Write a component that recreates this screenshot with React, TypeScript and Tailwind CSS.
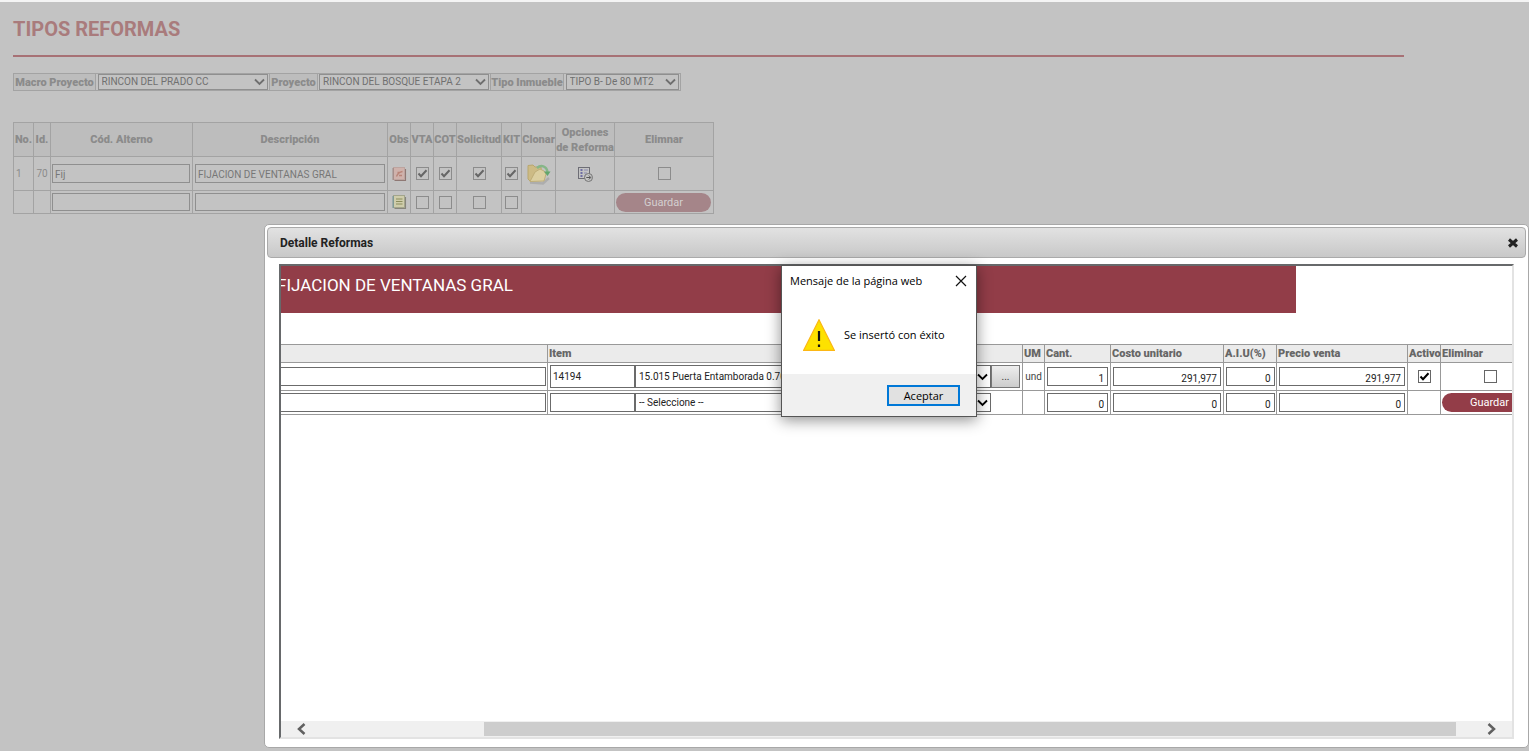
import type { ReactNode } from "react";
import clsx from "clsx";

interface ReformRow {
  no: string;
  id: string;
  code: string;
  description: string;
  checked: boolean;
  saved: boolean;
}

interface ItemRow {
  item: string;
  product: string;
  um: string;
  qty: string;
  cost: string;
  aiu: string;
  price: string;
  saved: boolean;
}

const reforms: ReformRow[] = [
  { no: "1", id: "70", code: "Fij", description: "FIJACION DE VENTANAS GRAL", checked: true, saved: true },
  { no: "", id: "", code: "", description: "", checked: false, saved: false },
];

const items: ItemRow[] = [
  { item: "14194", product: "15.015 Puerta Entamborada 0.70", um: "und", qty: "1", cost: "291,977", aiu: "0", price: "291,977", saved: true },
  { item: "", product: "-- Seleccione --", um: "", qty: "0", cost: "0", aiu: "0", price: "0", saved: false },
];

const flags = ["VTA", "COT", "Solicitud", "KIT"];

function Chevron({ className }: { className?: string }) {
  return (
    <svg viewBox="0 0 11 8" className={clsx("pointer-events-none absolute h-2 w-[11px]", className)} fill="none" stroke="currentColor" strokeWidth="1.8">
      <path d="M1 1.5 5.5 6 10 1.5" />
    </svg>
  );
}

function FilterSelect({ id, value, className }: { id: string; value: string; className: string }) {
  return (
    <div className={clsx("relative mx-auto", className)}>
      <select id={id} className="block h-4 w-full appearance-none border border-[#8f8f8f] bg-transparent px-[3px] text-[10px] leading-[14px] text-[#707070]">
        <option>{value}</option>
      </select>
      <Chevron className="right-[3px] top-1 text-[#6e6e6e]" />
    </div>
  );
}

function CheckBox({ label, checked, dim }: { label: string; checked?: boolean; dim?: boolean }) {
  return (
    <span className={clsx("relative mx-auto block size-[13px]", dim ? "text-[#666666]" : "text-black")}>
      <input
        type="checkbox"
        aria-label={label}
        defaultChecked={checked}
        className={clsx("peer block size-[13px] appearance-none border", dim ? "border-[#8c8c8c]" : "border-[#666666] bg-white")}
      />
      <svg viewBox="0 0 13 13" className="pointer-events-none absolute inset-0 hidden peer-checked:block" fill="none" stroke="currentColor" strokeWidth="2">
        <path d="M2.5 6.5 5 9.2 10.5 3.2" />
      </svg>
    </span>
  );
}

function NoteIcon({ red }: { red?: boolean }) {
  return (
    <svg viewBox="0 0 15 16" className="mx-auto block h-4 w-[15px]">
      <path d="M13.300 3v11.300H2.500" fill="none" stroke={red ? "#8f7874" : "#87857c"} strokeWidth="1.500" />
      <rect x="1.500" y="1.500" width="11" height="12" fill={red ? "#cfb2ac" : "#cfcdab"} stroke={red ? "#bda49f" : "#a3a58c"} />
      <path d="M1.200 2v12" stroke={red ? "#a58f8b" : "#7f9896"} strokeWidth="1.500" />
      {red ? (
        <path d="M4.500 10.500c1-3 3.500-4.500 6-5M5.500 6.500h2.500M7 9.500h3" fill="none" stroke="#b98478" strokeWidth="1.300" />
      ) : (
        <path d="M4 5h6.500M4 7.500h6.500M4 10h6.500" stroke="#8b8d5c" />
      )}
    </svg>
  );
}

function CloneIcon() {
  return (
    <svg viewBox="0 0 26 24" className="mx-auto block h-6 w-[26px]">
      <path d="M4 20.500 17 21.500 23 16" fill="none" stroke="#adadad" strokeWidth="2.500" />
      <path d="M2 3.500 7 3l2 2h6l1 12-12 2L2 17z" fill="#cdbb85" stroke="#b9a76f" />
      <path d="M4 19.500 9 10l5-3 4 2 2 3-2 7z" fill="#dccfa0" stroke="#bfae78" />
      <path d="M11 6c4-3.500 9.500-2 10.500 4" fill="none" stroke="#86b688" strokeWidth="2.500" />
      <path d="M18 9.500h6.500L21.500 14z" fill="#62a66c" />
    </svg>
  );
}

function OptionsIcon() {
  return (
    <svg viewBox="0 0 16 16" className="mx-auto block size-4" fill="none">
      <rect x="1.500" y="1.500" width="11" height="11" stroke="#6d6d75" />
      <path d="M3.500 4h2M3.500 7h2M3.500 10h2" stroke="#54549a" strokeWidth="1.500" />
      <path d="M7 4h4M7 7h3M7 10h1" stroke="#8a8ab0" />
      <circle cx="11.500" cy="11.500" r="4" fill="#c3c3c3" stroke="#747474" />
      <path d="M9.300 11.500h4.200M11.800 9.500l2 2-2 2" stroke="#555555" />
    </svg>
  );
}

function Th({ children, className }: { children?: ReactNode; className?: string }) {
  return <th className={clsx("border border-[#a3a3a3] p-0 text-[11px] font-black leading-[15px]", className)}>{children}</th>;
}

function Td({ children, className }: { children?: ReactNode; className?: string }) {
  return <td className={clsx("border border-[#a3a3a3] p-0", className)}>{children}</td>;
}

function Filters() {
  return (
    <table className="mt-4 h-[18px] table-fixed border-collapse text-[10px] leading-[15px] text-[#8b8b8b]">
      <tbody>
        <tr>
          <Th className="w-[82px] whitespace-nowrap bg-[#bdbdbd]"><label htmlFor="macro">Macro Proyecto</label></Th>
          <Td className="w-[174px]"><FilterSelect id="macro" value="RINCON DEL PRADO CC" className="w-[170px]" /></Td>
          <Th className="w-12 whitespace-nowrap bg-[#bdbdbd]"><label htmlFor="project">Proyecto</label></Th>
          <Td className="w-[173px]"><FilterSelect id="project" value="RINCON DEL BOSQUE ETAPA 2" className="w-[170px]" /></Td>
          <Th className="w-[73px] whitespace-nowrap bg-[#bdbdbd]"><label htmlFor="kind">Tipo Inmueble</label></Th>
          <Td className="w-[117px]"><FilterSelect id="kind" value="TIPO B- De 80 MT2" className="w-[113px]" /></Td>
        </tr>
      </tbody>
    </table>
  );
}

function ReformsTable() {
  const input = "block border border-[#8f8f8f] bg-transparent px-[2px] text-[10px] text-[#777777]";
  return (
    <table className="mt-[31px] w-[701px] table-fixed border-collapse text-[10px] leading-[15px] text-[#8b8b8b]">
      <colgroup>
        <col className="w-5" />
        <col className="w-[17px]" />
        <col className="w-[142px]" />
        <col className="w-[195px]" />
        <col className="w-[23px]" />
        <col className="w-[23px]" />
        <col className="w-[23px]" />
        <col className="w-[45px]" />
        <col className="w-5" />
        <col className="w-[34px]" />
        <col className="w-[59px]" />
        <col className="w-[99px]" />
      </colgroup>
      <thead>
        <tr className="h-[34px] bg-[#bdbdbd]">
          <Th>No.</Th>
          <Th>Id.</Th>
          <Th>Cód. Alterno</Th>
          <Th>Descripción</Th>
          <Th>Obs</Th>
          {flags.map((f) => (
            <Th key={f}>{f}</Th>
          ))}
          <Th>Clonar</Th>
          <Th className="whitespace-nowrap">Opciones<br />de Reforma</Th>
          <Th>Elimnar</Th>
        </tr>
      </thead>
      <tbody>
        {reforms.map((r, i) => (
          <tr key={i} className={r.saved ? "h-[34px]" : "h-[23px]"}>
            <Td className="pl-[2px]">{r.no}</Td>
            <Td className="text-center">{r.id}</Td>
            <Td><input aria-label="Cód. Alterno" defaultValue={r.code} className={clsx(input, "ml-px w-[138px]", r.saved ? "h-[19px] pt-[2px]" : "h-[18px]")} /></Td>
            <Td><input aria-label="Descripción" defaultValue={r.description} className={clsx(input, "ml-[2px] w-[190px]", r.saved ? "h-[19px] pt-[2px]" : "h-[18px]")} /></Td>
            <Td><NoteIcon red={r.saved} /></Td>
            {flags.map((f) => (
              <Td key={f}><CheckBox label={f} checked={r.checked} dim /></Td>
            ))}
            <Td>{r.saved && <CloneIcon />}</Td>
            <Td>{r.saved && <OptionsIcon />}</Td>
            <Td>
              {r.saved ? (
                <CheckBox label="Eliminar" dim />
              ) : (
                <button className="ml-px block h-[19px] w-[95px] rounded-full bg-[#a58589] text-[11px] leading-[19px] text-[#d4d0d0]">Guardar</button>
              )}
            </Td>
          </tr>
        ))}
      </tbody>
    </table>
  );
}

function ItemsTable() {
  const head = "border border-[#999999] p-0 pl-px text-left text-[11px] font-black leading-[15px]";
  const cell = "border border-[#999999] p-0";
  const box = "border border-[#6b6b6b] bg-white text-[10px] text-[#222222]";
  const num = clsx(box, "mx-auto block h-[19px] px-[3px] pt-[3px] text-right");
  return (
    <table className="-ml-px mt-[31px] w-[1266px] table-fixed border-collapse text-[10px] leading-[15px] text-[#666666]">
      <colgroup>
        <col className="w-[267px]" />
        <col className="w-[475px]" />
        <col className="w-[22px]" />
        <col className="w-[66px]" />
        <col className="w-[113px]" />
        <col className="w-[53px]" />
        <col className="w-[131px]" />
        <col className="w-[33px]" />
        <col className="w-[105px]" />
      </colgroup>
      <thead>
        <tr className="h-[18px] bg-[#ebebeb]">
          <th className={head} />
          <th className={head}>Item</th>
          <th className={head}>UM</th>
          <th className={head}>Cant.</th>
          <th className={head}>Costo unitario</th>
          <th className={head}>A.I.U(%)</th>
          <th className={head}>Precio venta</th>
          <th className={head}>Activo</th>
          <th className={head}>Eliminar</th>
        </tr>
      </thead>
      <tbody>
        {items.map((r, i) => (
          <tr key={i} className={r.saved ? "h-7" : "h-6"}>
            <td className={cell}><input aria-label="Detalle" className={clsx(box, "-ml-1 block h-[19px] w-[269px]")} /></td>
            <td className={cell}>
              <div className={clsx("flex pl-[2px]", r.saved ? "h-[23px]" : "h-[19px]")}>
                <input aria-label="Item" defaultValue={r.item} className={clsx(box, "w-[85px] px-[2px]")} />
                <div className="relative w-[356px]">
                  <select aria-label="Producto" className={clsx(box, "h-full w-full appearance-none px-[3px]")}>
                    <option>{r.product}</option>
                  </select>
                  <Chevron className={clsx("right-[3px] text-black", r.saved ? "top-2" : "top-1.5")} />
                </div>
                {r.saved && <button className="w-[29px] border border-[#777777] bg-linear-to-b from-[#ededed] to-[#cdcdcd] text-[10px] text-[#333333]">...</button>}
              </div>
            </td>
            <td className={clsx(cell, "text-center text-[#444444]")}>{r.um}</td>
            <td className={cell}><input aria-label="Cant." defaultValue={r.qty} className={clsx(num, "w-[61px]")} /></td>
            <td className={cell}><input aria-label="Costo unitario" defaultValue={r.cost} className={clsx(num, "w-[108px]")} /></td>
            <td className={cell}><input aria-label="A.I.U(%)" defaultValue={r.aiu} className={clsx(num, "w-[49px]")} /></td>
            <td className={cell}><input aria-label="Precio venta" defaultValue={r.price} className={clsx(num, "w-[126px]")} /></td>
            <td className={cell}>{r.saved && <CheckBox label="Activo" checked />}</td>
            <td className={cell}>
              {r.saved ? (
                <div className="w-[99px]"><CheckBox label="Eliminar" /></div>
              ) : (
                <button className="ml-px block h-[19px] w-[95px] rounded-full bg-[#933d48] text-[11px] leading-[19px] text-white">Guardar</button>
              )}
            </td>
          </tr>
        ))}
      </tbody>
    </table>
  );
}

function DetailDialog() {
  return (
    <section className="absolute left-[264px] right-0 top-[222px] rounded-[5px] border border-[#a8a8a8] bg-white p-[2px] pb-2">
      <header className="flex h-[31px] items-center justify-between rounded-[4px] border border-[#aaaaaa] bg-linear-to-b from-[#e2e2e2] to-[#c8c8c8] pl-3 pr-[7px]">
        <h2 className="text-[12px] font-bold text-[#222222]">Detalle Reformas</h2>
        <button aria-label="Cerrar">
          <svg viewBox="0 0 10 10" className="size-2.5" stroke="#222222" strokeWidth="3">
            <path d="m1 1.500 8 7M9 1.500l-8 7" />
          </svg>
        </button>
      </header>
      <div className="ml-3 mr-3 mt-1.5 flex h-[475px] flex-col overflow-hidden border-2 border-b-[#e3e3e3] border-l-[#67696b] border-r-[#e3e3e3] border-t-[#67696b]">
        <div className="min-h-0 flex-1 overflow-hidden">
          <h3 className="mr-[216px] h-[47px] overflow-hidden bg-[#923d48] text-[17px] leading-[38px] text-white">
            <span className="-ml-1">FIJACION DE VENTANAS GRAL</span>
          </h3>
          <ItemsTable />
        </div>
        <div className="flex h-4 items-center bg-[#f0f0f0] text-[#606060]">
          <button aria-label="Desplazar a la izquierda" className="flex w-[203px] pl-[15px]">
            <svg viewBox="0 0 10 12" className="h-3 w-2.5" fill="none" stroke="currentColor" strokeWidth="2.500">
              <path d="M8.500 1 3 6l5.500 5" />
            </svg>
          </button>
          <div className="h-[14px] flex-1 bg-[#cdcdcd]" />
          <button aria-label="Desplazar a la derecha" className="flex w-14 justify-end pr-[15px]">
            <svg viewBox="0 0 10 12" className="h-3 w-2.5" fill="none" stroke="currentColor" strokeWidth="2.500">
              <path d="M1.500 1 7 6l-5.500 5" />
            </svg>
          </button>
        </div>
      </div>
    </section>
  );
}

function MessageBox() {
  return (
    <div role="alertdialog" aria-label="Mensaje de la página web" className="absolute left-[781px] top-[263px] w-[196px] border border-[#555555] bg-white font-['Open_Sans',sans-serif] text-[11px] text-black shadow-[0_3px_14px_rgba(0,0,0,0.45)]">
      <div className="flex h-[30px] items-center justify-between pl-2 pr-[9px]">
        <span>Mensaje de la página web</span>
        <button aria-label="Cerrar">
          <svg viewBox="0 0 12 12" className="size-3" stroke="#111111" strokeWidth="1.200">
            <path d="m1 1 10 10M11 1 1 11" />
          </svg>
        </button>
      </div>
      <div className="flex h-[78px] items-center gap-[9px] pl-[21px]">
        <svg viewBox="0 0 32 32" className="size-8">
          <path d="M16 .8 31.300 31.300H.7z" fill="#fde100" stroke="#fcb714" strokeWidth="1.200" />
          <path d="M16 12v10M16 25.500v2.500" stroke="#111111" strokeWidth="2.200" />
        </svg>
        <span>Se insertó con éxito</span>
      </div>
      <div className="flex h-[42px] items-center justify-end bg-[#f0f0f0] pr-4">
        <button className="h-[21px] w-[73px] border-2 border-[#0078d7] bg-[#e1e1e1] leading-[17px]">Aceptar</button>
      </div>
    </div>
  );
}

export default function App() {
  return (
    <div className="relative min-h-screen overflow-hidden border-t-2 border-[#f4f4f4] bg-[#c3c3c3] font-[Roboto,sans-serif]">
      <main className="px-[13px]">
        <h1 className="pt-[13px] text-[20px] font-bold leading-7 text-[#a97b7c]">TIPOS REFORMAS</h1>
        <hr className="mr-28 mt-3 border-t-2 border-[#a77175]" />
        <Filters />
        <ReformsTable />
      </main>
      <DetailDialog />
      <MessageBox />
    </div>
  );
}
